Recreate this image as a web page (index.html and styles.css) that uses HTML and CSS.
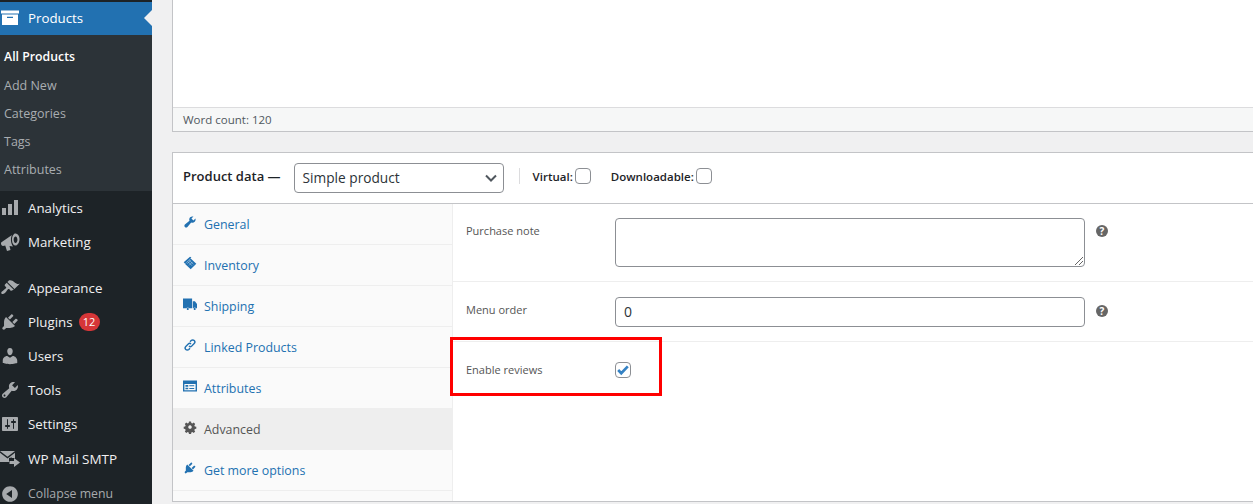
FILE: index.html
```html
<!DOCTYPE html>
<html>
<head>
	<title>Edit product</title>
	<link rel="stylesheet" href="styles.css">
</head>
<body>
	<aside class="sidebar">
		<a class="menu-item current">
			<svg class="menu-icon" viewBox="0 0 20 20"><path d="M1 2.500h18v3H1zM2 6.500h16v10.500H2z M7 8.700v1.300h6V8.700z" fill-rule="evenodd"/></svg>
			<span>Products</span>
		</a>
		<div class="submenu">
			<a class="sub-item active">All Products</a>
			<a class="sub-item">Add New</a>
			<a class="sub-item">Categories</a>
			<a class="sub-item">Tags</a>
			<a class="sub-item">Attributes</a>
		</div>
		<a class="menu-item">
			<svg class="menu-icon" viewBox="0 0 20 20"><path d="M2 10h4v7H2zM8 6h4v11H8zM14 2h4v15h-4z"/></svg>
			<span>Analytics</span>
		</a>
		<a class="menu-item last-in-group">
			<svg class="menu-icon" viewBox="0 0 20 20"><path d="M1 11.500c0-1 .5-1.500 1.500-2L12 3c-1.500 2.500-1.500 8 1 11.500L9.500 14l1 4-3.500 1-1.800-5.500-2.200.5c-1 0-2-1.300-2-2.500zM15 1.500c2.300-.5 4.300 1.800 4.500 5 .2 3.200-1.300 6.300-3.500 7-2.300.5-3.800-2-4-5-.2-3 1-6.500 3-7zM15.300 4.500c-1.100.3-1.800 2-1.600 3.700.2 1.700 1 3 2.100 2.700 1.100-.3 1.800-2 1.600-3.700-.2-1.700-1-3-2.100-2.700z" fill-rule="evenodd"/></svg>
			<span>Marketing</span>
		</a>
		<a class="menu-item">
			<svg class="menu-icon" viewBox="0 0 20 20"><path d="M14.480 11.060L7.410 3.990l1.500-1.500c.5-.56 2.300-.47 3.510.32 1.210.8 1.430 1.280 2.910 2.100 1.180.64 2.450 1.260 4.450.85zm-.71.71L6.700 4.700 4.930 6.470c-.39.39-.39 1.020 0 1.410l1.060 1.060c.39.39.39 1.030 0 1.420-.6.6-1.430 1.110-2.210 1.690-.35.26-.7.53-1.010.84C1.430 13.230.76 14.880 1.600 15.720c.84.84 2.490.17 3.830-1.170.31-.31.58-.66.84-1.010.58-.78 1.090-1.610 1.690-2.210.39-.39 1.030-.39 1.420 0l1.060 1.060c.39.39 1.020.39 1.410 0z"/></svg>
			<span>Appearance</span>
		</a>
		<a class="menu-item">
			<svg class="menu-icon" viewBox="0 0 20 20"><path d="M13.110 4.360L9.870 7.600 8 5.730l3.240-3.240c.35-.34 1.050-.2 1.560.32.520.51.660 1.210.310 1.550zm-8 1.770l.91-1.120 9.010 9.010-1.190.84c-.71.71-2.630 1.160-3.820 1.160H6.140L4.900 17.260c-.59.59-1.540.59-2.120 0-.59-.58-.59-1.530 0-2.120l1.240-1.240v-3.880c0-1.130.4-3.190 1.090-3.890zm7.260 3.970l3.240-3.240c.34-.35 1.040-.21 1.550.31.520.51.660 1.210.310 1.550l-3.240 3.250z"/></svg>
			<span>Plugins</span>
			<span class="count">12</span>
		</a>
		<a class="menu-item">
			<svg class="menu-icon" viewBox="0 0 20 20"><path d="M10 9.250c-2.270 0-2.730-3.440-2.730-3.440C7 4.020 7.820 2 9.970 2c2.160 0 2.980 2.020 2.710 3.810 0 0-.41 3.440-2.680 3.440zm0 2.570L12.720 10c2.390 0 4.520 2.330 4.520 4.530v2.490s-3.650 1.130-7.240 1.130c-3.650 0-7.240-1.130-7.240-1.130v-2.490c0-2.250 1.940-4.480 4.470-4.480z"/></svg>
			<span>Users</span>
		</a>
		<a class="menu-item">
			<svg class="menu-icon" viewBox="0 0 20 20"><path d="M16.680 9.770c-1.340 1.340-3.300 1.670-4.950.99l-5.410 6.520c-.99.99-2.590.99-3.580 0s-.99-2.590 0-3.580l6.520-5.420c-.68-1.650-.35-3.610.99-4.950 1.280-1.280 3.120-1.620 4.720-1.060l-2.890 2.890 2.820 2.820 2.860-2.870c.53 1.580.18 3.390-1.080 4.660zM3.810 16.210c.4.39 1.040.39 1.430 0 .4-.4.4-1.040 0-1.430-.39-.4-1.030-.4-1.430 0-.39.39-.39 1.030 0 1.430z"/></svg>
			<span>Tools</span>
		</a>
		<a class="menu-item">
			<svg class="menu-icon" viewBox="0 0 20 20"><path d="M18 16V4c0-.55-.45-1-1-1H3c-.55 0-1 .45-1 1v12c0 .55.45 1 1 1h14c.55 0 1-.45 1-1zM8 11h1c.55 0 1 .45 1 1s-.45 1-1 1H8v1.500c0 .28-.22.5-.5.5s-.5-.22-.5-.5V13H6c-.55 0-1-.45-1-1s.45-1 1-1h1V5.500c0-.28.22-.5.5-.5s.5.22.5.5V11zm5-2h-1c-.55 0-1-.45-1-1s.45-1 1-1h1V5.500c0-.28.22-.5.5-.5s.5.22.5.5V7h1c.55 0 1 .45 1 1s-.45 1-1 1h-1v5.500c0 .28-.22.5-.5.5s-.5-.22-.5-.5V9z" fill-rule="evenodd"/></svg>
			<span>Settings</span>
		</a>
		<a class="menu-item mail-item">
			<svg class="menu-icon" viewBox="0 0 20 20"><path d="M0 2h15L7.500 7.800zM0 3.800l7.500 5.700L15 3.800V9h-3v-.5L9 9v4H0zM14 9l6 4.500-6 4.500v-3H9.500v-3H14z"/></svg>
			<span>WP Mail SMTP</span>
		</a>
		<a class="menu-item collapse">
			<svg class="menu-icon" viewBox="0 0 20 20"><path d="M10 2.160c4.330 0 7.840 3.510 7.840 7.840s-3.510 7.840-7.840 7.840S2.160 14.330 2.160 10 5.710 2.160 10 2.160zm2 11.720V6.120L6.180 9.970z"/></svg>
			<span>Collapse menu</span>
		</a>
	</aside>

	<main class="content">
		<div class="editor-box">
			<div class="editor-area"></div>
			<div class="status-bar">Word count: 120</div>
		</div>

		<div class="product-box">
			<div class="product-head">
				<strong class="head-title">Product data —</strong>
				<div class="select-box">
					<span class="select-text">Simple product</span>
					<svg class="chevron" viewBox="0 0 16 16"><path d="M3 5.500l5 5 5-5" fill="none" stroke="#50575e" stroke-width="2"/></svg>
				</div>
				<span class="head-sep"></span>
				<label class="head-check">Virtual: <span class="checkbox"></span></label>
				<label class="head-check">Downloadable: <span class="checkbox"></span></label>
			</div>
			<div class="product-body">
				<ul class="tabs">
					<li class="tab">
						<svg class="tab-icon" viewBox="0 0 20 20"><path d="M16.680 9.770c-1.340 1.340-3.300 1.670-4.950.99l-5.410 6.520c-.99.99-2.590.99-3.580 0s-.99-2.590 0-3.580l6.520-5.420c-.68-1.650-.35-3.610.99-4.950 1.280-1.280 3.120-1.620 4.720-1.060l-2.890 2.890 2.820 2.820 2.860-2.870c.53 1.580.18 3.390-1.080 4.660z"/></svg>
						General
					</li>
					<li class="tab">
						<svg class="tab-icon" viewBox="0 0 20 20"><path d="M1 9l9-8 2 1L3 11zM11 3.500l8 7.500-8 8-8-7.500z"/><path d="M7 8l6 6M9 6l6 6M6 11l5-5M8.500 13.500l5-5" stroke="#fff" stroke-opacity=".6" stroke-width=".9" fill="none"/></svg>
						Inventory
					</li>
					<li class="tab">
						<svg class="tab-icon" viewBox="0 0 20 20"><path d="M0 2h13v14H8.800a2.300 2.300 0 0 0-4 0H0zM14 6h3l3 4v6h-1.300a2.300 2.300 0 0 0-4 0H14zM6.800 15.500a1.500 1.500 0 1 1-.01 0zM16.700 15.500a1.500 1.500 0 1 1-.01 0z"/></svg>
						Shipping
					</li>
					<li class="tab">
						<svg class="tab-icon" viewBox="0 0 20 20"><path d="M8.500 11.500a3 3 0 0 0 4 0l3.500-3.500a3 3 0 0 0-4.300-4.300L10 5.500M11.500 8.500a3 3 0 0 0-4 0L4 12a3 3 0 0 0 4.300 4.300L10 14.500" fill="none" stroke="currentColor" stroke-width="2"/></svg>
						Linked Products
					</li>
					<li class="tab">
						<svg class="tab-icon" viewBox="0 0 20 20"><path d="M0 2h20v16H0zM2 7v9h16V7zM3.500 8.500h4v2.500h-4zM9 9h7v1.300H9zM3.500 12.500h4v2h-4zM9 13h7v1.300H9z" fill-rule="evenodd"/></svg>
						Attributes
					</li>
					<li class="tab selected">
						<svg class="tab-icon" viewBox="0 0 20 20"><path d="M8.500 2h3l.4 2.200 1.500.7 1.900-1.200 2.100 2.100-1.200 1.900.7 1.500 2.100.4v3l-2.100.4-.7 1.500 1.200 1.900-2.100 2.100-1.900-1.200-1.500.7-.4 2.100h-3l-.4-2.100-1.500-.7-1.900 1.200-2.100-2.100 1.200-1.900-.7-1.500-2.100-.4v-3l2.100-.4.7-1.500-1.200-1.900 2.100-2.100 1.900 1.200 1.500-.7zM10 7.500a2.500 2.500 0 1 0 .01 0z" fill-rule="evenodd"/></svg>
						Advanced
					</li>
					<li class="tab">
						<svg class="tab-icon" viewBox="0 0 20 20"><path d="M13.110 4.360L9.870 7.600 8 5.730l3.240-3.240c.35-.34 1.050-.2 1.560.32.520.51.660 1.210.310 1.550zm-8 1.770l.91-1.120 9.010 9.010-1.190.84c-.71.71-2.630 1.160-3.820 1.160H6.140L4.900 17.260c-.59.59-1.540.59-2.120 0-.59-.58-.59-1.530 0-2.120l1.240-1.240v-3.880c0-1.130.4-3.190 1.090-3.890zm7.260 3.970l3.240-3.240c.34-.35 1.040-.21 1.550.31.520.51.660 1.210.310 1.550l-3.240 3.250z"/></svg>
						Get more options
					</li>
				</ul>
				<div class="panel">
					<div class="field field-note">
						<label class="field-label">Purchase note</label>
						<div class="textarea">
							<svg class="grip" viewBox="0 0 10 10"><path d="M1 9l8-8M5 9l4-4" stroke="#666" stroke-width="1" fill="none"/></svg>
						</div>
						<span class="help">?</span>
					</div>
					<div class="field field-order">
						<label class="field-label">Menu order</label>
						<div class="number-input">0</div>
						<span class="help">?</span>
					</div>
					<div class="field field-reviews">
						<label class="field-label">Enable reviews</label>
						<span class="checkbox checked">
							<svg viewBox="0 0 16 16"><path d="M2.500 8l3.500 3.700L13.500 3.800" fill="none" stroke="#3582c4" stroke-width="3"/></svg>
						</span>
					</div>
					<div class="highlight"></div>
				</div>
			</div>
		</div>
	</main>
</body>
</html>
```

FILE: styles.css
```css
html, body {
	margin: 0;
	height: 504px;
	overflow: hidden;
}
body {
	display: flex;
	background: #f0f0f1;
	font-family: "Open Sans", "Noto Sans", sans-serif;
	font-size: 12.4px;
	color: #3c434a;
}

/* admin menu */
.sidebar {
	width: 152px;
	flex: none;
	height: 504px;
	padding-top: 2px;
	box-sizing: border-box;
	background: #1d2327;
}
.menu-item {
	display: flex;
	align-items: center;
	gap: 8px;
	height: 34px;
	box-sizing: border-box;
	padding-bottom: 1px;
	color: #f0f0f1;
	font-size: 13.3px;
	white-space: nowrap;
}
.menu-icon {
	width: 20px;
	height: 20px;
	flex: none;
	fill: #a7aaad;
}
.menu-item.current {
	position: relative;
	height: 33px;
	background: #2271b1;
	color: #fff;
}
.menu-item.current .menu-icon {
	fill: #fff;
}
.menu-item.current::after {
	content: "";
	position: absolute;
	right: 0;
	top: 8px;
	border: 8px solid transparent;
	border-left-width: 0;
	border-right-color: #f0f0f1;
}
.last-in-group {
	margin-bottom: 12px;
}
.mail-item {
	margin-top: 1px;
	font-size: 13.5px;
}
.submenu {
	height: 156px;
	box-sizing: border-box;
	padding-top: 8px;
	background: #2c3338;
}
.sub-item {
	display: block;
	height: 28px;
	line-height: 28px;
	padding-left: 4px;
	color: #a9adb1;
	font-size: 12.5px;
}
.sub-item.active {
	height: 29px;
	color: #fff;
	font-size: 12.3px;
	font-weight: 600;
}
.count {
	display: inline-block;
	margin-left: -2px;
	width: 21px;
	height: 18px;
	line-height: 18px;
	border-radius: 9px;
	background: #d63638;
	color: #fff;
	font-size: 11px;
	text-align: center;
}
.collapse {
	padding-bottom: 0;
	padding-top: 1px;
	color: #a7aaad;
	font-size: 12.3px;
}

/* main column */
.content {
	flex: 1;
	min-width: 0;
	overflow: hidden;
	padding-left: 20px;
}
.editor-box {
	width: 1200px;
	background: #fff;
	border: 1px solid #c3c4c7;
	border-top: 0;
}
.editor-area {
	height: 107px;
}
.status-bar {
	height: 23px;
	line-height: 23px;
	padding-left: 10px;
	border-top: 1px solid #dcdcde;
	background: #f6f7f7;
	font-size: 11.500px;
	color: #50575e;
}

.product-box {
	width: 1200px;
	height: 348px;
	margin-top: 20px;
	background: #fff;
	border: 1px solid #c3c4c7;
}
.product-head {
	display: flex;
	align-items: center;
	height: 50px;
	padding-left: 10px;
	border-bottom: 1px solid #c3c4c7;
	color: #1d2327;
}
.head-title {
	margin-top: -4px;
	margin-right: 13px;
	font-size: 13px;
	font-weight: 600;
}
.select-box {
	display: flex;
	align-items: center;
	justify-content: space-between;
	width: 200px;
	height: 28px;
	padding-left: 8px;
	border: 1px solid #8c8f94;
	border-radius: 4px;
	font-size: 13.700px;
	color: #2c3338;
}
.select-text {
	margin-top: -2px;
}
.chevron {
	width: 16px;
	height: 16px;
	margin-right: 4px;
}
.head-sep {
	width: 1px;
	height: 16px;
	margin: -4px 13px 0 15px;
	background: #dcdcde;
}
.head-check {
	display: flex;
	align-items: center;
	gap: 2px;
	margin-top: -4px;
	margin-right: 20px;
	font-size: 11.500px;
	font-weight: 600;
}
.checkbox {
	display: inline-block;
	box-sizing: border-box;
	width: 16px;
	height: 16px;
	border: 1px solid #8c8f94;
	border-radius: 4px;
	background: #fff;
}

.product-body {
	display: flex;
	height: 297px;
}
.tabs {
	width: 279px;
	flex: none;
	margin: 0;
	padding: 0;
	list-style: none;
	background: #fafafa;
	border-right: 1px solid #eee;
}
.tab {
	display: flex;
	align-items: center;
	gap: 7px;
	height: 40px;
	padding-left: 10px;
	border-bottom: 1px solid #eee;
	color: #2271b1;
}
.tab-icon {
	width: 14px;
	height: 14px;
	margin-top: -4px;
	fill: currentColor;
}
.tab.selected {
	background: #eee;
	color: #555;
}

.panel {
	position: relative;
	flex: 1;
	font-size: 11px;
}
.field {
	display: flex;
	align-items: flex-start;
	box-sizing: border-box;
	border-bottom: 1px solid #eee;
	padding-left: 13px;
	color: #555;
}
.field-label {
	width: 149px;
	flex: none;
	line-height: 18px;
}
.field-note {
	height: 78px;
	padding-top: 18px;
}
.textarea {
	position: relative;
	width: 468px;
	height: 47px;
	margin-top: -4px;
	border: 1px solid #8c8f94;
	border-radius: 4px;
}
.grip {
	position: absolute;
	right: 0;
	bottom: 0;
	width: 10px;
	height: 10px;
}
.field-order {
	height: 60px;
	padding-top: 20px;
}
.field-order .field-label {
	margin-top: -1px;
}
.number-input {
	width: 460px;
	height: 28px;
	line-height: 28px;
	padding-left: 8px;
	margin-top: -5px;
	border: 1px solid #8c8f94;
	border-radius: 4px;
	font-size: 14px;
	color: #2c3338;
}
.help {
	width: 12px;
	height: 12px;
	margin-left: 11px;
	margin-top: 3px;
	border-radius: 50%;
	background: #666;
	color: #fff;
	font-size: 10px;
	font-weight: 700;
	line-height: 12px;
	text-align: center;
}
.field-reviews {
	align-items: center;
	height: 56px;
	border-bottom: 0;
}
.checkbox.checked {
	display: block;
}
.checkbox.checked svg {
	display: block;
	width: 14px;
	height: 14px;
}
.highlight {
	position: absolute;
	left: -3px;
	top: 133px;
	width: 206px;
	height: 53px;
	border: 3px solid #f00;
}
```
